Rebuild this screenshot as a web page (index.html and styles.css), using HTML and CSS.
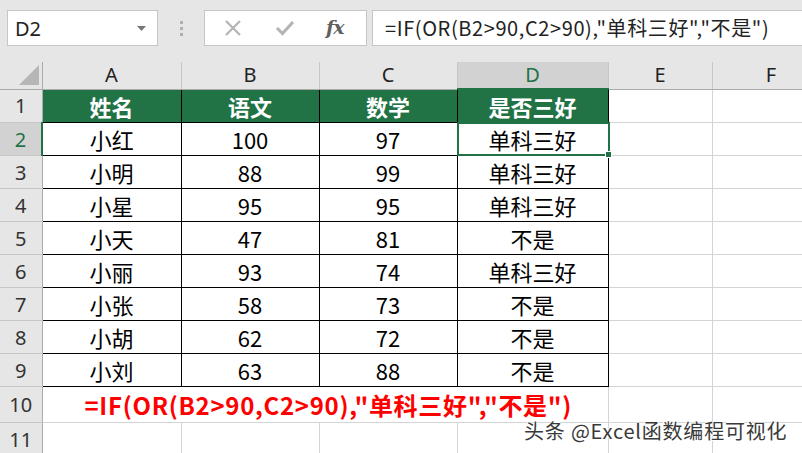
FILE: index.html
```html
<!DOCTYPE html>
<html>
<head>
<meta charset="utf-8">
<link rel="stylesheet" href="styles.css">
</head>
<body>
<div class="app">
  <div class="toolbar">
    <div class="namebox">
      <span class="name">D2</span>
      <svg class="caret" width="9" height="5" viewBox="0 0 9 5"><path d="M0 0H9L4.5 5Z" fill="#777"/></svg>
    </div>
    <div class="grip"><i></i><i></i><i></i></div>
    <div class="btns">
      <svg class="btn" width="18" height="18" viewBox="0 0 18 18"><path d="M2 2L16 16M16 2L2 16" stroke="#b4b4b4" stroke-width="2.2"/></svg>
      <svg class="btn" width="20" height="18" viewBox="0 0 20 18"><path d="M2 9L7.5 14.5L18 3" stroke="#b4b4b4" stroke-width="3" fill="none"/></svg>
      <span class="fx">fx</span>
    </div>
    <div class="formula">=IF(OR(B2&gt;90,C2&gt;90),"单科三好","不是")</div>
  </div>
  <div class="sheet">
    <table class="grid">
      <colgroup>
        <col class="c-rh"><col class="c-a"><col class="c-b"><col class="c-c"><col class="c-d"><col class="c-e"><col class="c-f">
      </colgroup>
      <tr class="colhdr">
        <th class="corner"><svg width="22" height="22" viewBox="0 0 22 22"><path d="M21 1V21H1Z" fill="#b6b6b6"/></svg></th>
        <th>A</th><th>B</th><th>C</th><th class="hl">D</th><th>E</th><th>F</th>
      </tr>
      <tr>
        <th class="rh">1</th>
        <td class="t head">姓名</td><td class="t head">语文</td><td class="t head">数学</td><td class="t head">是否三好</td><td class="g top"></td><td class="g top"></td>
      </tr>
      <tr>
        <th class="rh hl">2</th>
        <td class="t">小红</td><td class="t">100</td><td class="t">97</td><td class="t sel"><div class="selbox"><span class="handle"></span></div>单科三好</td><td class="g"></td><td class="g"></td>
      </tr>
      <tr>
        <th class="rh">3</th>
        <td class="t">小明</td><td class="t">88</td><td class="t">99</td><td class="t">单科三好</td><td class="g"></td><td class="g"></td>
      </tr>
      <tr>
        <th class="rh">4</th>
        <td class="t">小星</td><td class="t">95</td><td class="t">95</td><td class="t">单科三好</td><td class="g"></td><td class="g"></td>
      </tr>
      <tr>
        <th class="rh">5</th>
        <td class="t">小天</td><td class="t">47</td><td class="t">81</td><td class="t">不是</td><td class="g"></td><td class="g"></td>
      </tr>
      <tr>
        <th class="rh">6</th>
        <td class="t">小丽</td><td class="t">93</td><td class="t">74</td><td class="t">单科三好</td><td class="g"></td><td class="g"></td>
      </tr>
      <tr>
        <th class="rh">7</th>
        <td class="t">小张</td><td class="t">58</td><td class="t">73</td><td class="t">不是</td><td class="g"></td><td class="g"></td>
      </tr>
      <tr>
        <th class="rh">8</th>
        <td class="t">小胡</td><td class="t">62</td><td class="t">72</td><td class="t">不是</td><td class="g"></td><td class="g"></td>
      </tr>
      <tr>
        <th class="rh">9</th>
        <td class="t">小刘</td><td class="t">63</td><td class="t">88</td><td class="t">不是</td><td class="g"></td><td class="g"></td>
      </tr>
      <tr>
        <th class="rh">10</th>
        <td class="g red" colspan="4">=IF(OR(B2&gt;90,C2&gt;90),"单科三好","不是")</td><td class="g"></td><td class="g"></td>
      </tr>
      <tr>
        <th class="rh">11</th>
        <td class="g"></td><td class="g"></td><td class="g"></td><td class="g"></td><td class="g"></td><td class="g"></td>
      </tr>
    </table>
    <div class="watermark">头条 @Excel函数编程可视化</div>
  </div>
</div>
</body>
</html>
```
FILE: styles.css
```css
html, body {
  margin: 0;
  padding: 0;
  background: #e6e6e6;
}
.app {
  width: 802px;
  height: 453px;
  overflow: hidden;
  font-family: "Noto Sans CJK SC", "Noto Sans", sans-serif;
  position: relative;
}
.toolbar {
  height: 62px;
  box-sizing: border-box;
  padding: 10px 0 0 7px;
  display: flex;
  align-items: flex-start;
}
.namebox {
  width: 151px;
  height: 36px;
  box-sizing: border-box;
  background: #fff;
  border: 1px solid #c6c6c6;
  display: flex;
  align-items: center;
  justify-content: space-between;
  padding: 0 11px 0 7px;
}
.name {
  font-family: "Noto Sans", sans-serif;
  font-size: 20px;
  color: #222;
}
.caret { margin-top: 1px; }
.grip {
  width: 46px;
  height: 36px;
  display: flex;
  flex-direction: column;
  align-items: center;
  justify-content: center;
  gap: 3px;
}
.grip i {
  display: block;
  width: 3px;
  height: 3px;
  background: #b0b0b0;
}
.btns {
  width: 163px;
  height: 36px;
  box-sizing: border-box;
  background: #fff;
  border: 1px solid #c6c6c6;
  display: flex;
  align-items: center;
  padding-left: 19px;
  gap: 0;
}
.btns .btn:nth-child(1) { margin-right: 33px; }
.btns .btn:nth-child(2) { margin-right: 31px; }
.fx {
  font-family: "DejaVu Serif", "Liberation Serif", serif;
  font-style: italic;
  font-weight: bold;
  font-size: 19px;
  color: #606060;
  letter-spacing: -1px;
  margin-top: -2px;
}
.formula {
  margin-left: 5px;
  flex: 1;
  height: 36px;
  box-sizing: border-box;
  background: #fff;
  border: 1px solid #c6c6c6;
  border-right: none;
  padding-left: 12px;
  font-size: 20px;
  letter-spacing: 0.6px;
  line-height: 33px;
  color: #222;
  white-space: nowrap;
}
.sheet {
  position: relative;
}
.grid {
  border-collapse: collapse;
  table-layout: fixed;
  width: 830px;
  background: #fff;
}
.c-rh { width: 42px; }
.c-a { width: 139px; }
.c-b { width: 138px; }
.c-c { width: 138px; }
.c-d { width: 151px; }
.c-e { width: 104px; }
.c-f { width: 118px; }
.grid th, .grid td {
  padding: 0;
  text-align: center;
  vertical-align: middle;
  white-space: nowrap;
}
.colhdr th {
  height: 26px;
  background: #e6e6e6;
  border-left: 1px solid #c6c6c6;
  border-right: 1px solid #c6c6c6;
  border-bottom: 1px solid #ababab;
  font-family: "Noto Sans", sans-serif;
  font-weight: normal;
  font-size: 20px;
  line-height: 26px;
  color: #222;
}
.colhdr th.corner {
  border-left: none;
  border-right: 1px solid #ababab;
  text-align: right;
  padding-right: 2px;
  line-height: 0;
}
.colhdr th.hl {
  background: #d2d2d2;
  color: #217346;
  border-bottom: 2px solid #217346;
}
.rh {
  height: 32px;
  background: #e6e6e6;
  border-top: 1px solid #c6c6c6;
  border-bottom: 1px solid #c6c6c6;
  border-right: 1px solid #ababab;
  font-family: "Noto Sans", sans-serif;
  font-weight: normal;
  font-size: 20px;
  color: #333;
}
.rh.hl {
  background: #d2d2d2;
  color: #217346;
  border-right: 2px solid #217346;
}
td.t {
  border: 1px solid #000;
  font-size: 22px;
  line-height: 28px;
  color: #000;
  height: 32px;
}
td.head {
  background: #217346;
  color: #fff;
  font-weight: bold;
}
td.g {
  border: 1px solid #d4d4d4;
  height: 32px;
}
td.g.top { border-top: 1px solid #ababab; }
td.red {
  text-align: left;
  padding-left: 42px;
  color: #ff0000;
  font-weight: bold;
  font-size: 24px;
  letter-spacing: 0.7px;
}
td.sel {
  position: relative;
}
.selbox {
  position: absolute;
  left: -1px;
  top: -1px;
  right: -2px;
  bottom: -1px;
  border: 2px solid #217346;
}
.handle {
  position: absolute;
  right: -4px;
  bottom: -4px;
  width: 5px;
  height: 5px;
  background: #217346;
  border: 1px solid #fff;
}
.watermark {
  position: absolute;
  left: 524px;
  top: 354px;
  font-size: 20px;
  letter-spacing: 0.8px;
  color: #3a3a3a;
  white-space: nowrap;
  text-shadow: 1px 0 0 #fff, -1px 0 0 #fff, 0 1px 0 #fff, 0 -1px 0 #fff;
}
```
